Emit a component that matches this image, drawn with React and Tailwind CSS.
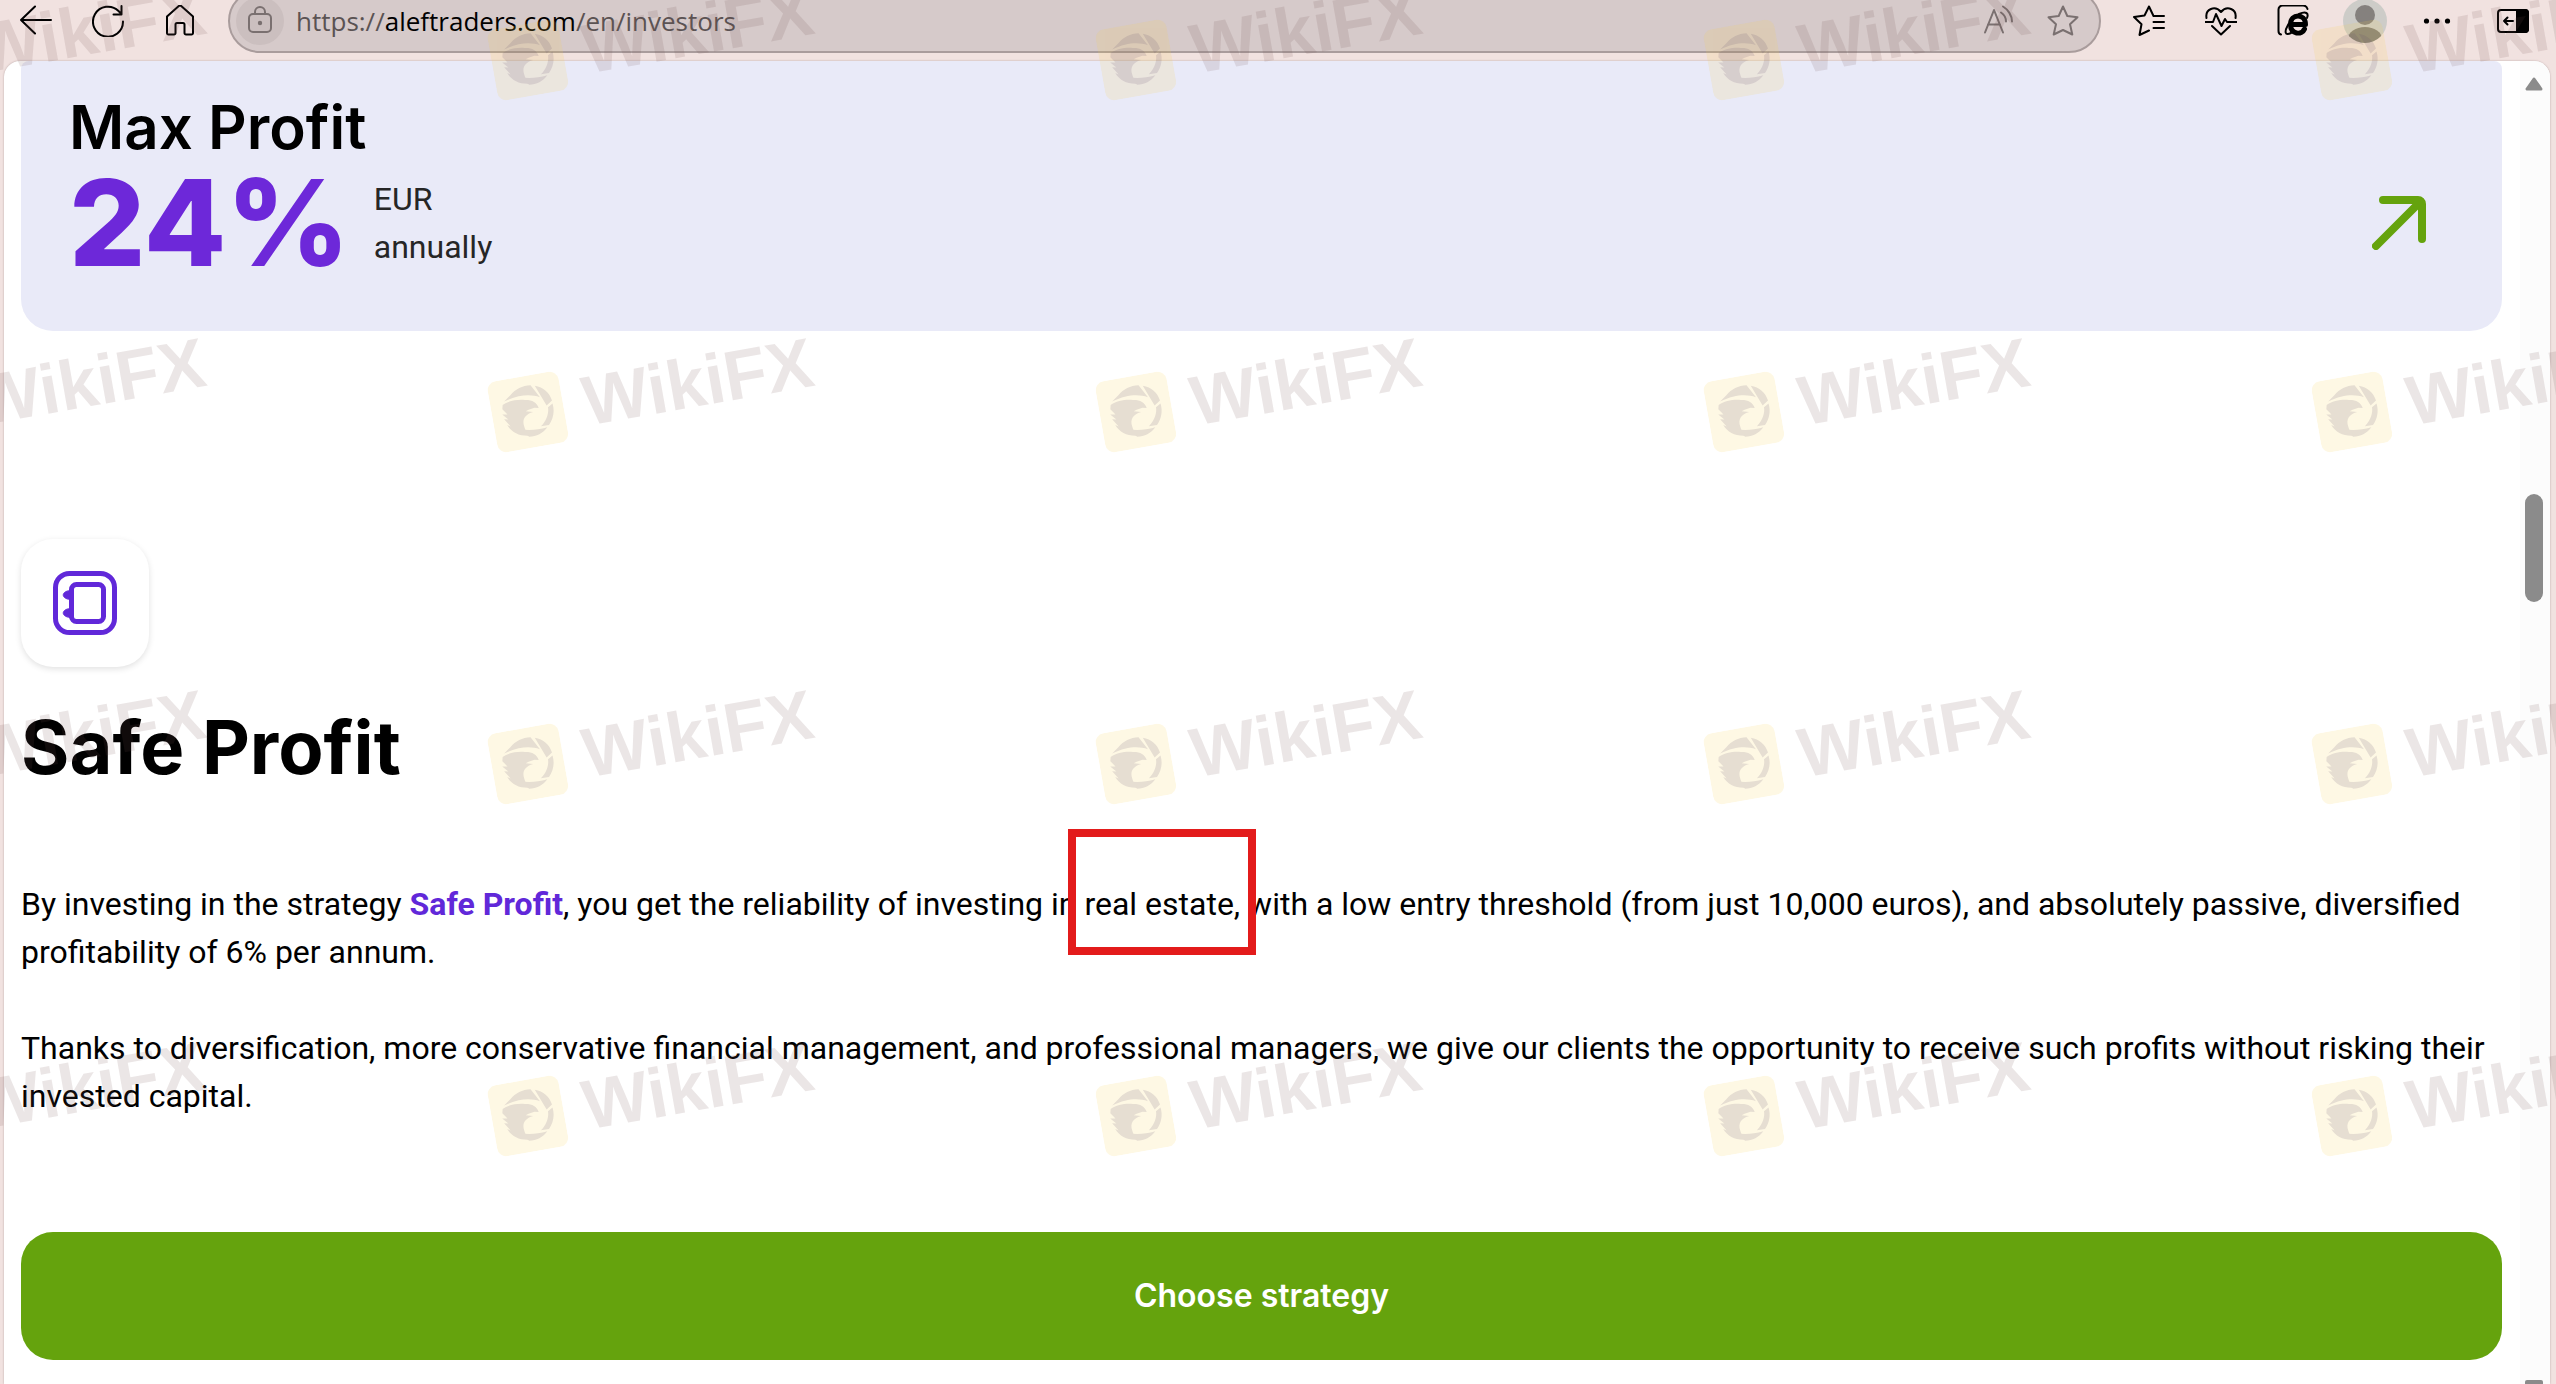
function IconButton({ label, children, className = "" }) {
  return (
    <button aria-label={label} className={`h-8 w-8 shrink-0 ${className}`}>
      {children}
    </button>
  );
}

function Icon({ children, width = 2 }) {
  return (
    <svg
      viewBox="0 0 32 32"
      className="h-8 w-8"
      fill="none"
      stroke="currentColor"
      strokeWidth={width}
      strokeLinecap="round"
      strokeLinejoin="round"
    >
      {children}
    </svg>
  );
}

function Toolbar() {
  return (
    <header className="h-[61px] shrink-0 text-black">
      <div className="-mt-[11px] flex h-16 items-center pl-5 pr-[27px]">
        <div className="flex gap-10">
          <IconButton label="Back">
            <Icon>
              <path d="M31 15H1M15 1.500 1 15l14 13.500" />
            </Icon>
          </IconButton>
          <IconButton label="Refresh">
            <Icon>
              <path d="M31 16.500A15 15 0 1 1 26.500 6L29.500 9M29.500 1v8.500h-8" />
            </Icon>
          </IconButton>
          <IconButton label="Home">
            <Icon>
              <path d="M3 11.500 14.500 1.200a2.200 2.200 0 0 1 3 0L29 11.500V28a1.500 1.500 0 0 1-1.500 1.500H22A1.500 1.500 0 0 1 20.500 28v-8.500a1.500 1.500 0 0 0-1.500-1.500h-6a1.500 1.500 0 0 0-1.500 1.500V28a1.500 1.500 0 0 1-1.500 1.500H4.500A1.500 1.500 0 0 1 3 28Z" />
            </Icon>
          </IconButton>
        </div>

        {/* Address bar */}
        <div className="ml-8 mr-8 flex h-16 flex-1 items-center rounded-full border-2 border-[#a99c9c] bg-[#d6caca] pl-1.5 pr-5 text-[#7a7070]">
          <button
            aria-label="Site information"
            className="flex h-12 w-12 items-center justify-center rounded-full bg-[#cbbfbf]"
          >
            <Icon>
              <rect x="5" y="9" width="22" height="18" rx="4" />
              <path d="M11 9V7a5 5 0 0 1 10 0v2" />
              <circle cx="16" cy="18" r="1.200" fill="currentColor" />
            </Icon>
          </button>
          <div className="ml-3 flex-1 font-['Open_Sans',sans-serif] text-[26px] leading-8 text-[#5b5353]">
            https://<span className="text-black">aleftraders.com</span>/en/investors
          </div>
          <div className="flex gap-8">
            <IconButton label="Read aloud">
              <Icon>
                <path d="M2 27.500 11 5l9 22.500M5 19.500h12" />
                <path d="M18 7.500c3 2 5 6 5 9M20 1.500c5 3 9 9 9 15" />
              </Icon>
            </IconButton>
            <IconButton label="Add to favorites">
              <Icon>
                <path d="m16 1.500 4.300 9.500 10.200 1.200-7.500 7.100 2.300 10.200L16 25 6.700 29.500 9 19.300 1.500 12.200l10.200-1.200Z" />
              </Icon>
            </IconButton>
          </div>
        </div>

        <div className="flex items-center gap-10">
          <IconButton label="Favorites">
            <Icon>
              <path d="M31 11H20.500L16 1.500l-4.500 9L1 12l7.500 7.200L6.500 30l9.500-4.500M20.500 17H31M20.500 23H31" />
            </Icon>
          </IconButton>
          <IconButton label="Browser essentials">
            <Icon>
              <path d="M1.500 13C0 4 10 0 16 7c6-7 16-3 14.500 6" />
              <path d="M.5 17H8l3-8 5.500 12 3.500-7 2 3h9.500M7 21l9 8.500 9-8.500" />
            </Icon>
          </IconButton>
          <IconButton label="Internet Explorer mode">
            <Icon>
              <path d="M4 29.500Q1.500 29 1.500 26V4.500a4 4 0 0 1 4-4H26Q29.500 .5 30.500 4" />
              <path
                strokeWidth="5"
                d="M13 19.500h15.500C28.500 8 13.500 8 13.500 19.500c0 10 11.500 11 14 4.500"
              />
              <path d="M22 9c7-3 10-1 8 4M11 20c-4 7-3 11 3 8" />
            </Icon>
          </IconButton>
          <IconButton label="Profile">
            <svg viewBox="0 0 44 44" className="-mx-1.5 h-11 w-11 max-w-none -translate-y-1.5">
              <clipPath id="avatar">
                <circle cx="22" cy="22" r="22" />
              </clipPath>
              <g clipPath="url(#avatar)">
                <rect width="44" height="44" fill="#cdccc8" />
                <circle cx="22" cy="16" r="10" fill="#85817e" />
                <ellipse cx="22" cy="40" rx="17" ry="12" fill="#85807a" />
              </g>
            </svg>
          </IconButton>
          <IconButton label="More">
            <Icon>
              <g fill="currentColor" stroke="none">
                <circle cx="5.500" cy="16" r="2.600" />
                <circle cx="16" cy="16" r="2.600" />
                <circle cx="26.500" cy="16" r="2.600" />
              </g>
            </Icon>
          </IconButton>
          <IconButton label="Sidebar" className="ml-1">
            <Icon>
              <rect x="1" y="5" width="30" height="22" rx="3" />
              <path d="M20 5h8a3 3 0 0 1 3 3v16a3 3 0 0 1-3 3h-8Z" fill="currentColor" />
              <path d="M16 16H7M10.500 12.500 7 16l3.500 3.500" />
            </Icon>
          </IconButton>
        </div>
      </div>
    </header>
  );
}

function ProfitCard() {
  return (
    <section className="rounded-b-[32px] rounded-t-lg bg-[#e9eaf8] px-12 pb-[52px] pt-[34px]">
      <h2 className="text-[60px] font-semibold leading-[64px] text-black">Max Profit</h2>
      <div className="mt-2 flex items-center">
        <div className="text-[120px] font-extrabold leading-[112px] text-[#6d28d9]">24%</div>
        <div className="ml-6 flex-1 font-[Roboto,sans-serif] text-[32px] leading-[48px] text-[#262626]">
          <div>EUR</div>
          <div>annually</div>
        </div>
        <a href="#strategy" aria-label="Open Max Profit" className="mr-7 text-[#65a30d]">
          <svg
            viewBox="0 0 54 54"
            className="h-[54px] w-[54px]"
            fill="none"
            stroke="currentColor"
            strokeWidth="8"
            strokeLinecap="round"
          >
            <path d="M11 4h35a4 4 0 0 1 4 4v35M48 6 4 50" />
          </svg>
        </a>
      </div>
    </section>
  );
}

function SafeProfit() {
  return (
    <section className="mt-52">
      <div className="flex h-32 w-32 items-center justify-center rounded-[32px] bg-white shadow-[0_2px_6px_rgba(0,0,0,0.12)]">
        <svg
          viewBox="0 0 64 64"
          className="h-16 w-16"
          fill="none"
          stroke="#6128d9"
          strokeWidth="5"
        >
          <rect x="2.500" y="2.500" width="59" height="59" rx="14" />
          <rect x="18.500" y="13.500" width="32" height="37" rx="5" />
          <path d="M17 19.500c-9 1-9 8 0 9ZM17 37.500c-9 1-9 8 0 9Z" fill="#6128d9" strokeWidth="1" />
        </svg>
      </div>
      <h1 className="mt-10 text-[74px] font-bold leading-[80px] text-black">Safe Profit</h1>

      <div className="mt-[93px] space-y-12 font-[Roboto,sans-serif] text-[32px] leading-[48px] text-black">
        <p>
          By investing in the strategy <b className="font-bold text-[#6128d9]">Safe Profit</b>, you
          get the reliability of investing in{" "}
          <span className="relative">
            real estate,
            <span className="absolute -bottom-8 -left-4 -right-4 -top-14 border-8 border-[#e31b1b]" />
          </span>{" "}
          with a low entry threshold (from just 10,000 euros), and absolutely passive, diversified
          profitability of 6% per annum.
        </p>
        <p>
          Thanks to diversification, more conservative financial management, and professional
          managers, we give our clients the opportunity to receive such profits without risking
          their invested capital.
        </p>
      </div>

      <button className="mt-28 h-32 w-full rounded-[32px] bg-[#65a30d] text-[32px] font-semibold text-white">
        Choose strategy
      </button>
    </section>
  );
}

function Scrollbar() {
  return (
    <div className="flex w-[30px] shrink-0 flex-col items-center overflow-hidden rounded-tr-2xl bg-[#fcfcfc] pt-4 pr-0.5">
      <svg viewBox="0 0 18 14" className="h-3.5 w-[18px] shrink-0">
        <path d="M9 2 2 12h14Z" fill="#8b8b8b" stroke="#8b8b8b" strokeWidth="3" strokeLinejoin="round" />
      </svg>
      <div className="mt-[403px] h-[108px] w-[18px] shrink-0 rounded-full bg-[#8b8b8b]" />
      <div className="-mb-2.5 mt-auto h-3.5 w-[18px] shrink-0 rounded-xs bg-[#8b8b8b]" />
    </div>
  );
}

function Mark() {
  return (
    <div className="flex h-[352px] w-[608px] items-center justify-center">
      <div className="flex -rotate-10 items-center gap-5">
        <svg viewBox="0 0 70 70" className="h-[72px] w-[72px]">
          <rect width="70" height="70" rx="9" fill="#f5cf4a" opacity="0.15" />
          <g fill="#5f4a6a" opacity="0.15">
            <path d="M21 16C27 11 34 9 42 10L49 23C40 18 29 17 14 21ZM46 11c8 3 13 9 14 17L54 32ZM60 31c1 8-2 15-7 20H45c7-5 10-12 10-17ZM51 53c-5 5-12 7-19 6L24 50c8 3 17 4 27 3Z" />
            <path d="M12 24c6-3 16-3 22-1 7 1 11 4 12 10l-4-1-6 1-3 1 7 2c-9 1-12 6-11 12 0 4 2 7 4 10-10-1-17-6-20-14l3 2-5-8 4 1-5-6 5 1-4-6Z" />
          </g>
        </svg>
        <span className="font-['Liberation_Sans',sans-serif] text-[70px] font-bold leading-none text-[#6f4f4f]/14">
          WikiFX
        </span>
      </div>
    </div>
  );
}

// 5 x 4 tiles, bleeding off the left and top edges
function Watermark() {
  return (
    <div className="pointer-events-none absolute inset-0 overflow-hidden" aria-hidden="true">
      <div className="-ml-[260px] -mt-[138px] grid w-max grid-cols-5">
        {Array.from({ length: 20 }, (_, i) => (
          <Mark key={i} />
        ))}
      </div>
    </div>
  );
}

export default function App() {
  return (
    <div className="relative flex h-screen flex-col overflow-hidden bg-[#f1e2e0] font-[Inter,sans-serif]">
      <Toolbar />
      <div className="ml-1 mr-1.5 flex min-h-0 flex-1 rounded-t-2xl bg-white shadow-[0_0_2px_rgba(90,60,60,0.4)]">
        <main className="min-w-0 flex-1 overflow-hidden pl-[17px] pr-[18px]">
          <ProfitCard />
          <SafeProfit />
        </main>
        <Scrollbar />
      </div>
      <Watermark />
    </div>
  );
}
